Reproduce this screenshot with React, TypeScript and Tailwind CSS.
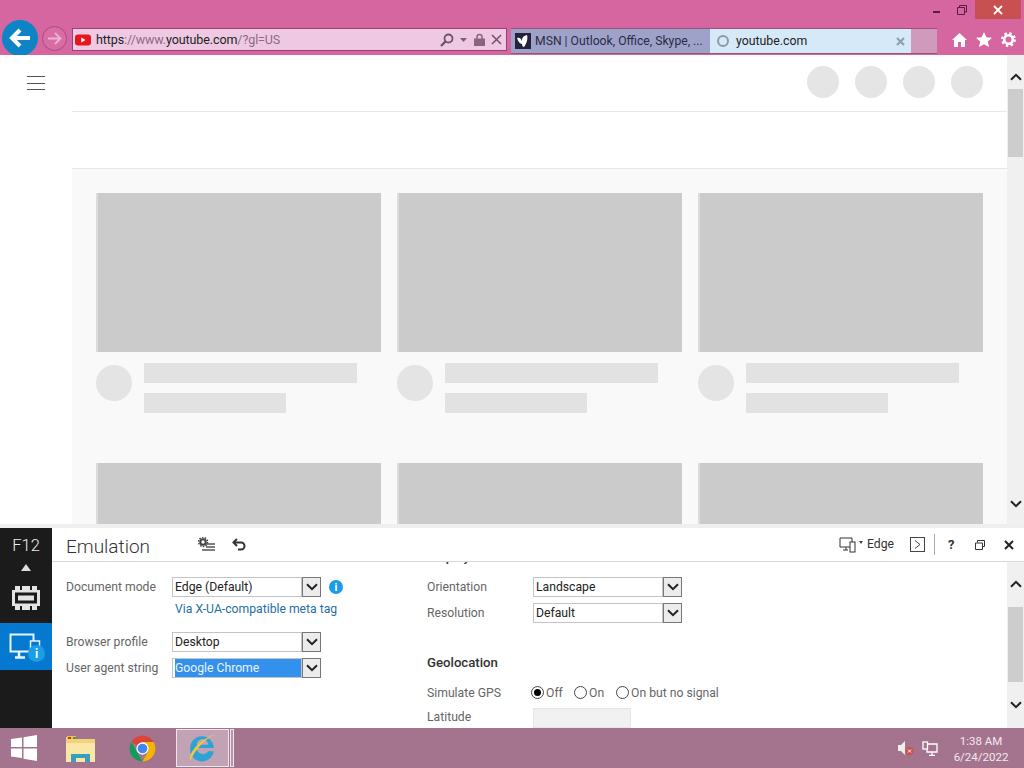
import { ReactNode } from "react";

const font = "font-['Roboto','Open_Sans',sans-serif]";

function Chevron({ className = "" }: { className?: string }) {
  return (
    <svg width="12" height="8" viewBox="0 0 12 8" className={className}>
      <path d="M1 1.200l5 5 5-5" fill="none" stroke="#222" strokeWidth="2" />
    </svg>
  );
}

function Select({ value, selected }: { value: string; selected?: boolean }) {
  return (
    <div className="flex h-5 w-[149px]">
      <div className="flex min-w-0 flex-1 items-center border border-[#c4c4c4] bg-white pl-[2px]">
        <span
          className={
            selected
              ? "flex h-full w-full items-center bg-[#3391ee] text-[12.200px] text-[#e8f3fd]"
              : "text-[12.200px] text-[#222]"
          }
        >
          {value}
        </span>
      </div>
      <div className="flex w-[19px] items-center justify-center border border-[#777] bg-[#ececec]">
        <Chevron />
      </div>
    </div>
  );
}

function Row({ label, width, children }: { label: string; width: string; children: ReactNode }) {
  return (
    <div className="flex h-5 items-center">
      <span className={`${width} text-[12.200px] text-[#666]`}>{label}</span>
      {children}
    </div>
  );
}

function Radio({ label, checked, width }: { label: string; checked?: boolean; width: string }) {
  return (
    <div className={`flex items-center ${width}`}>
      <span className="flex h-[13px] w-[13px] items-center justify-center rounded-full border border-[#444] bg-white">
        {checked && <span className="h-[7px] w-[7px] rounded-full bg-black" />}
      </span>
      <span className="ml-[2px] text-[12.200px] text-[#666]">{label}</span>
    </div>
  );
}

function VideoCard() {
  return (
    <div>
      <div className="h-[159px] border-l-2 border-l-[#dcdcdc] bg-[#cbcbcb]" />
      <div className="mt-[11px] flex">
        <div className="mt-[2px] h-9 w-9 rounded-full bg-[#e4e4e4]" />
        <div className="ml-3">
          <div className="h-5 w-[213px] bg-[#e2e2e2]" />
          <div className="mt-[10px] h-5 w-[142px] bg-[#e2e2e2]" />
        </div>
      </div>
    </div>
  );
}

function Toolbar() {
  return (
    <div className="flex h-[55px] shrink-0 flex-col overflow-hidden bg-[#d6669f]">
      <div className="flex h-[27px] shrink-0 justify-end">
        <div className="flex h-[19px] items-center">
          <div className="mr-[17px] mt-[5px] h-[2px] w-[7px] bg-[#5a1d45]" />
          <svg width="10" height="10" viewBox="0 0 10 10" className="mr-[8px]">
            <path d="M2.500 2.500V.5h7v6.500H7.500M.5 2.500h7v7h-7z" fill="none" stroke="#5a1d45" />
          </svg>
          <div className="flex h-[19px] w-[46px] items-center justify-center bg-[#c75050]">
            <svg width="10" height="10" viewBox="0 0 10 10">
              <path d="M1 1l8 8M9 1l-8 8" stroke="#fff" strokeWidth="1.800" />
            </svg>
          </div>
          <div className="w-[3px]" />
        </div>
      </div>
      <div className="flex h-[28px] shrink-0 items-start pl-[2px]">
        <div className="-mt-[7px] flex h-9 w-9 shrink-0 items-center justify-center rounded-full bg-[#0d84c6]">
          <svg width="22" height="20" viewBox="0 0 22 20">
            <path d="M11 2L3 10l8 8M3 10h18" fill="none" stroke="#fff" strokeWidth="4" />
          </svg>
        </div>
        <div className="-mt-[1px] ml-[4px] flex h-[25px] w-[25px] shrink-0 items-center justify-center rounded-full border border-[#a84a83] bg-[#d76da4]">
          <svg width="15" height="13" viewBox="0 0 15 13">
            <path d="M8 1l5.500 5.500L8 12M13 6.500H1" fill="none" stroke="#eeb4d2" strokeWidth="1.800" />
          </svg>
        </div>
        <div className="ml-[5px] mt-[1px] flex h-[23px] w-[435px] shrink-0 items-center border border-[#94456f] bg-[#efc9e3] pl-[2px] pr-[4px]">
          <svg width="16" height="12" viewBox="0 0 16 12" className="shrink-0">
            <rect width="16" height="11" y="0.500" rx="3" fill="#e8141c" />
            <path d="M6.300 3.500v5l4.200-2.500z" fill="#fff" />
          </svg>
          <span className="ml-[5px] flex-1 pt-[1px] text-[12.500px] leading-none tracking-[-0.1px] text-[#8c6a82]">
            <span className="text-[#222]">https</span>://www.<span className="text-[#222]">youtube.com</span>/?gl=US
          </span>
          <svg width="14" height="14" viewBox="0 0 14 14">
            <circle cx="8.500" cy="5.500" r="4" fill="none" stroke="#6d5468" strokeWidth="1.800" />
            <path d="M5.500 8.500L1 13" stroke="#6d5468" strokeWidth="2.400" />
          </svg>
          <svg width="7" height="4" viewBox="0 0 7 4" className="ml-[6px]">
            <path d="M0 0h7L3.500 4z" fill="#7c5f75" />
          </svg>
          <svg width="11" height="13" viewBox="0 0 11 13" className="ml-[7px]">
            <path d="M3 6V4a2.500 2.500 0 015 0v2" fill="none" stroke="#8a6480" strokeWidth="1.500" />
            <rect y="5.500" width="11" height="7.500" fill="#8a6480" />
          </svg>
          <svg width="11" height="11" viewBox="0 0 11 11" className="ml-[6px]">
            <path d="M1 1l9 9M10 1l-9 9" stroke="#6d5468" strokeWidth="1.500" />
          </svg>
        </div>
        <div className="ml-[4px] mt-[1px] flex h-[26px] w-[199px] shrink-0 items-center border-y border-[#96537c] bg-[#9ea2c9] pl-[4px] text-[12.200px] text-[#2b2b45]">
          <div className="flex h-4 w-4 shrink-0 items-center justify-center bg-[#22233a]">
            <svg width="14" height="14" viewBox="0 0 14 14">
              <path d="M1 4c2-1 4 0 5 3 0-3 1-5 5-6 1 3 0 8-3 12-1 0-2-1-2-3-2 0-4-3-5-6z" fill="#fff" />
            </svg>
          </div>
          <span className="ml-[4px] whitespace-nowrap pt-[1px]">MSN | Outlook, Office, Skype, ...</span>
        </div>
        <div className="mt-[1px] flex h-[26px] w-[201px] shrink-0 items-center border-y border-[#96537c] bg-[#d6e9f8] pl-[7px] pr-[6px] text-[12.300px] text-[#222]">
          <div className="h-[12px] w-[12px] rounded-full border-2 border-[#8d9aa5]" />
          <span className="ml-[7px] flex-1 pt-[1px]">youtube.com</span>
          <svg width="9" height="9" viewBox="0 0 9 9">
            <path d="M1 1l7 7M8 1L1 8" stroke="#8d9db0" strokeWidth="2" />
          </svg>
        </div>
        <div className="mt-[1px] h-[26px] w-[26px] shrink-0 border-y border-[#96537c] bg-[#cf9abb]" />
        <div className="ml-[15px] flex items-center gap-[9px] pt-[5px]">
          <svg width="15" height="14" viewBox="0 0 15 14">
            <path d="M7.500 0L0 7h2v7h4V9h3v5h4V7h2z" fill="#fff" />
          </svg>
          <svg width="16" height="15" viewBox="0 0 16 15">
            <path d="M8 0l2.400 5.200 5.600.6-4.200 3.800 1.200 5.400L8 12.200 3 15l1.200-5.400L0 5.800l5.600-.6z" fill="#fff" />
          </svg>
          <svg width="15" height="15" viewBox="0 0 15 15">
            <circle cx="7.500" cy="7.500" r="4.300" fill="none" stroke="#fff" strokeWidth="2.600" />
            <circle cx="7.500" cy="7.500" r="6.200" fill="none" stroke="#fff" strokeWidth="2.400" strokeDasharray="2.400 2.470" />
          </svg>
        </div>
      </div>
    </div>
  );
}

function Page() {
  return (
    <div className="flex h-[469px] shrink-0 overflow-hidden bg-white">
      <div className="w-[72px] shrink-0 pl-[27px] pt-[21px]">
        <div className="flex w-[18px] flex-col gap-[5.500px]">
          <div className="h-px bg-[#555]" />
          <div className="h-px bg-[#555]" />
          <div className="h-px bg-[#555]" />
        </div>
      </div>
      <div className="flex min-w-0 flex-1 flex-col">
        <div className="flex h-[57px] shrink-0 items-center justify-end gap-4 border-b border-[#e8e8e8] pb-[3px] pr-6">
          <div className="h-8 w-8 rounded-full bg-[#e5e5e5]" />
          <div className="h-8 w-8 rounded-full bg-[#e5e5e5]" />
          <div className="h-8 w-8 rounded-full bg-[#e5e5e5]" />
          <div className="h-8 w-8 rounded-full bg-[#e5e5e5]" />
        </div>
        <div className="h-[57px] shrink-0 border-b border-[#e8e8e8]" />
        <div className="grid flex-1 grid-cols-[285px_285px_285px] gap-x-4 gap-y-[50px] bg-[#f9f9f9] pl-6 pt-6">
          {Array.from({ length: 6 }).map((_, i) => (
            <VideoCard key={i} />
          ))}
        </div>
      </div>
      <div className="flex w-[17px] shrink-0 flex-col items-center bg-[#f0f0f0]">
        <div className="flex h-[34px] w-full items-center justify-center pt-[10px]">
          <Chevron className="rotate-180" />
        </div>
        <div className="h-[68px] w-[15px] bg-[#cdcdcd]" />
        <div className="flex-1" />
        <div className="flex h-[44px] w-full items-center justify-center pt-[3px]">
          <Chevron />
        </div>
      </div>
    </div>
  );
}

function Sidebar() {
  return (
    <div className="flex w-[52px] shrink-0 flex-col bg-[#1b1b1b] text-white">
      <div className="flex h-[36px] items-center justify-center pt-[1px] text-[16.500px] font-light leading-none text-[#eee]">F12</div>
      <div className="flex h-[8px] justify-center">
        <div className="h-0 w-0 border-x-[5.500px] border-b-[7px] border-x-transparent border-b-[#ddd]" />
      </div>
      <div className="flex h-[51px] items-center justify-center">
        <svg width="28" height="24" viewBox="0 0 28 24">
          <path d="M3 0h5v4h2V0h8v4h2V0h5v4h3v16h-3v4h-5v-4h-2v4h-8v-4H8v4H3v-4H0V4h3z" fill="#e4e4e4" />
          <rect x="3" y="6.500" width="22" height="11" fill="#1b1b1b" />
          <rect x="6" y="9.500" width="16" height="5" fill="#e4e4e4" />
        </svg>
      </div>
      <div className="relative h-[47px] bg-[#0479cf]">
        <svg width="38" height="36" viewBox="0 0 38 36" className="absolute left-[9px] top-[10px]">
          <rect x="1.500" y="1.500" width="23" height="17" fill="none" stroke="#e8f4fc" strokeWidth="2" />
          <path d="M10 19v5M6 24.500h10" stroke="#e8f4fc" strokeWidth="2.500" />
          <rect x="21.500" y="8" width="9" height="13" fill="#0479cf" stroke="#e8f4fc" strokeWidth="1.500" />
        </svg>
        <div className="absolute left-[28px] top-[22px] flex h-[17px] w-[17px] items-center justify-center rounded-full bg-[#1a9fe6] text-[12px] font-bold leading-none text-white">i</div>
      </div>
    </div>
  );
}

function PanelHeader() {
  return (
    <div className="flex h-[34px] shrink-0 items-center border-b border-[#d8d8d8] pl-[14px] pr-[10px]">
      <span className="w-[132px] pt-[3px] text-[19px] font-light leading-none text-[#333]">Emulation</span>
      <svg width="17" height="15" viewBox="0 0 17 15">
        <circle cx="5" cy="5" r="2.700" fill="none" stroke="#444" strokeWidth="2" />
        <circle cx="5" cy="5" r="4.500" fill="none" stroke="#444" strokeWidth="1.500" strokeDasharray="1.500 1.300" />
        <path d="M8 7h9M8 10h9M4 13h13" stroke="#555" strokeWidth="1.400" />
      </svg>
      <svg width="15" height="13" viewBox="0 0 15 13" className="ml-[17px]">
        <path d="M5 1L1.500 4.500 5 8" fill="none" stroke="#333" strokeWidth="2" />
        <path d="M2 4.500h7a3.500 3.500 0 010 7H6" fill="none" stroke="#333" strokeWidth="2" />
      </svg>
      <div className="flex-1" />
      <svg width="17" height="16" viewBox="0 0 17 16">
        <path d="M1 1h12v9H1zM7 10v3M4 13h5" fill="none" stroke="#333" />
        <rect x="11" y="5" width="5" height="10" fill="#fff" stroke="#333" />
      </svg>
      <div className="ml-[3px] mt-[-4px] h-0 w-0 border-x-[2.500px] border-t-[3px] border-x-transparent border-t-[#444]" />
      <span className="ml-[4px] w-[43px] text-[12.200px] text-[#333]">Edge</span>
      <div className="flex h-[15px] w-[15px] items-center justify-center border border-[#444]">
        <svg width="7" height="9" viewBox="0 0 7 9">
          <path d="M1 .5L6 4.500 1 8.500" fill="none" stroke="#444" />
        </svg>
      </div>
      <div className="mx-[9px] h-[21px] w-px bg-[#aaa]" />
      <span className="ml-[4px] w-[27px] text-[13px] font-bold text-[#333]">?</span>
      <svg width="10" height="10" viewBox="0 0 10 10">
        <path d="M2.500 2.500V.5h7v6h-2M.5 3h7v6.500h-7z" fill="none" stroke="#333" />
      </svg>
      <svg width="10" height="10" viewBox="0 0 10 10" className="ml-[19px]">
        <path d="M1 1l8 8M9 1l-8 8" stroke="#222" strokeWidth="2" />
      </svg>
    </div>
  );
}

function Panel() {
  return (
    <div className="flex h-[200px] shrink-0 bg-white">
      <Sidebar />
      <div className="flex min-w-0 flex-1 flex-col">
        <PanelHeader />
        <div className="flex min-h-0 flex-1 overflow-hidden">
          <div className="flex-1 overflow-hidden">
            <div className="flex">
              <div className="w-[375px] pl-[14px] pt-[15px]">
                <Row label="Document mode" width="w-[106px]">
                  <Select value="Edge (Default)" />
                  <div className="ml-[8px] flex h-[14px] w-[14px] items-center justify-center rounded-full bg-[#1e9be8] text-[11px] font-bold leading-none text-white">i</div>
                </Row>
                <div className="ml-[109px] mt-[2px] h-5 text-[12.200px] leading-5 text-[#1f6fa5]">Via X-UA-compatible meta tag</div>
                <div className="mt-[13px]">
                  <Row label="Browser profile" width="w-[106px]">
                    <Select value="Desktop" />
                  </Row>
                </div>
                <div className="mt-[6px]">
                  <Row label="User agent string" width="w-[106px]">
                    <Select value="Google Chrome" selected />
                  </Row>
                </div>
              </div>
              <div className="w-[400px]">
                <div className="-mt-[13px] h-[16px] text-[13.200px] font-medium leading-4 text-[#333]">Display</div>
                <div className="mt-[12px]">
                  <Row label="Orientation" width="w-[106px]">
                    <Select value="Landscape" />
                  </Row>
                </div>
                <div className="mt-[6px]">
                  <Row label="Resolution" width="w-[106px]">
                    <Select value="Default" />
                  </Row>
                </div>
                <div className="mt-[31px] h-[18px] text-[13.200px] font-medium leading-[18px] text-[#333]">Geolocation</div>
                <div className="mt-[11px]">
                  <Row label="Simulate GPS" width="w-[104px]">
                    <div className="flex">
                      <Radio label="Off" checked width="w-[43px]" />
                      <Radio label="On" width="w-[42px]" />
                      <Radio label="On but no signal" width="w-[110px]" />
                    </div>
                  </Row>
                </div>
                <div className="mt-[5px]">
                  <Row label="Latitude" width="w-[106px] pb-[2px]">
                    <div className="h-5 w-[98px] border border-[#e4e4e4] bg-[#f1f1f1]" />
                  </Row>
                </div>
              </div>
            </div>
          </div>
          <div className="flex w-[17px] shrink-0 flex-col items-center bg-[#f0f0f0]">
            <div className="flex h-[45px] w-full items-center justify-center pb-[2px]">
              <Chevron className="rotate-180" />
            </div>
            <div className="h-[75px] w-[15px] bg-[#cdcdcd]" />
            <div className="flex h-[46px] w-full items-center justify-center">
              <Chevron />
            </div>
          </div>
        </div>
      </div>
    </div>
  );
}

function Taskbar() {
  return (
    <div className="flex h-10 shrink-0 items-center bg-[#a4748f]">
      <svg width="26" height="26" viewBox="0 0 26 26" className="ml-[11px]">
        <path d="M0 4l11-1.500V12H0zM12.500 2.300L26 0v12H12.500zM0 13.500h11V23L0 21.500zM12.500 13.500H26V26l-13.500-2.200z" fill="#fff" />
      </svg>
      <svg width="31" height="29" viewBox="0 0 31 29" className="ml-[28px]">
        <path d="M1 3h8l2 2h19v23H1z" fill="#f3d27a" />
        <path d="M1 9h29v19H1z" fill="#f9e7a5" />
        <rect x="2" y="2" width="9" height="3" fill="#e9c25b" />
        <path d="M3 4h3" stroke="#c23a2d" strokeWidth="2" />
        <path d="M8 4h3" stroke="#4e9a3d" strokeWidth="2" />
        <path d="M6 28V20h19v8h-5v-4h-9v4z" fill="#3b9ec0" />
      </svg>
      <svg width="31" height="31" viewBox="0 0 48 48" className="ml-[31px]">
        <path d="M24 24L6.700 14A20 20 0 0141.300 14H24z" fill="#db4437" />
        <path d="M24 44A20 20 0 016.700 14L16 30z" fill="#0f9d58" />
        <path d="M24 44L33 28 24 14h17.300A20 20 0 0124 44z" fill="#f4b400" />
        <circle cx="24" cy="24" r="9.500" fill="#fff" />
        <circle cx="24" cy="24" r="7.500" fill="#4285f4" />
      </svg>
      <div className="ml-[18px] flex h-[38px] w-[53px] items-center justify-center border border-[#efe6ec] bg-[#c2a2b5]">
        <svg width="32" height="34" viewBox="0 0 30 30">
          <path d="M3 15a11 11 0 0122 0H9a6 6 0 0011 3h5a11 11 0 01-22-3zM9 12h11a5.500 5.500 0 00-11 0z" fill="#2ba3d6" />
          <path d="M3 27C1 21 10 7 27 2c1 0-6 2-12 8C9 16 5 22 3 27z" fill="#f0c93a" />
        </svg>
      </div>
      <div className="ml-px h-[38px] w-[4px] border border-[#efe6ec] bg-[#b794a9]" />
      <div className="flex-1" />
      <svg width="16" height="16" viewBox="0 0 16 16">
        <path d="M0 5h3l4-4v14l-4-4H0z" fill="#eee" />
        <circle cx="11.500" cy="11" r="4" fill="#d0504e" />
        <path d="M10 9.500l3 3M13 9.500l-3 3" stroke="#fff" />
      </svg>
      <svg width="16" height="15" viewBox="0 0 16 15" className="ml-[8px]">
        <path d="M5 3h10v8H5zM10 11v3M7 14.500h6" fill="none" stroke="#fff" strokeWidth="1.300" />
        <rect x="1" y="1" width="4.500" height="7" fill="#a4748f" stroke="#fff" strokeWidth="1.300" />
      </svg>
      <div className="ml-[17px] mr-[17px] mt-[2px] flex w-[52px] flex-col items-center whitespace-nowrap text-[11.500px] leading-4 text-[#f3e7ee]">
        <span>1:38 AM</span>
        <span>6/24/2022</span>
      </div>
    </div>
  );
}

export default function App() {
  return (
    <div className={`flex h-[768px] w-[1024px] flex-col overflow-hidden ${font}`}>
      <Toolbar />
      <Page />
      <div className="h-[4px] shrink-0 bg-[#efefef]" />
      <Panel />
      <Taskbar />
    </div>
  );
}
